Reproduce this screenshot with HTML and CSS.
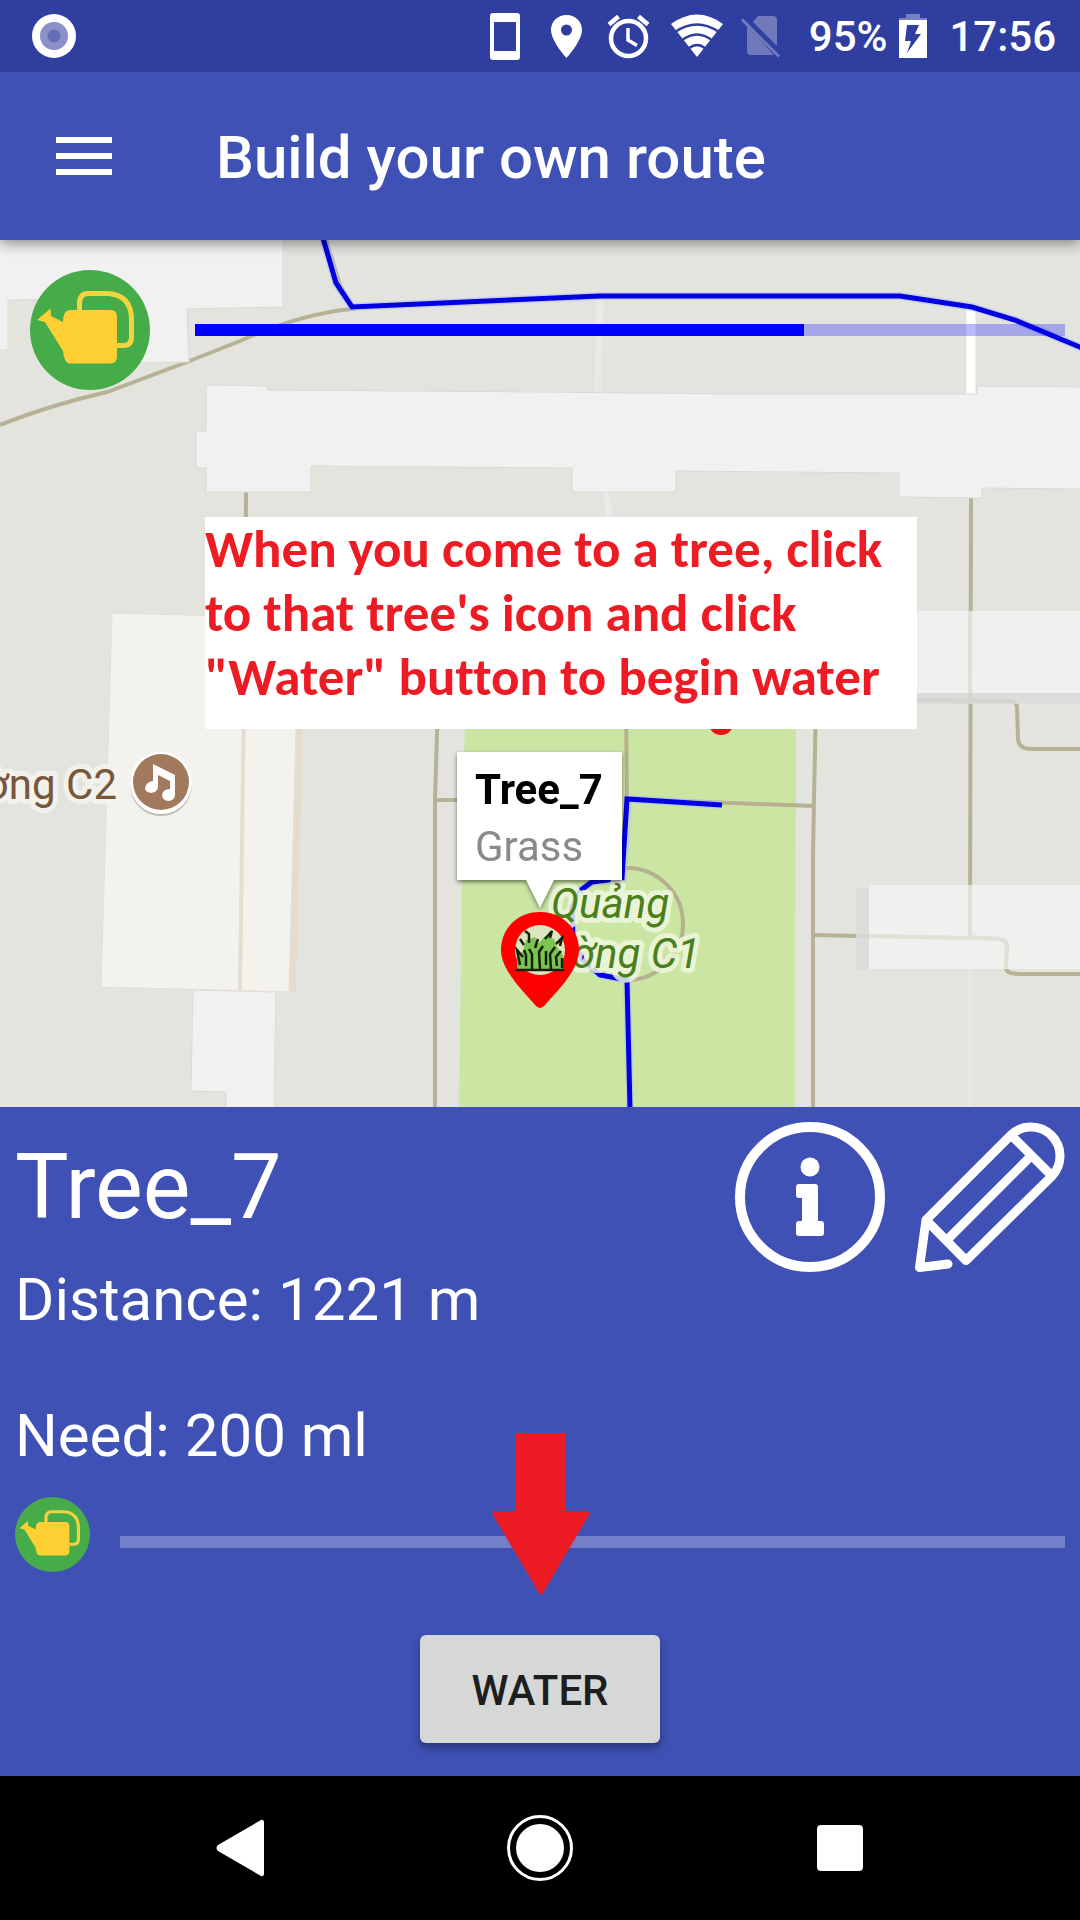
FILE: index.html
```html
<!DOCTYPE html>
<html lang="en">
<head>
<meta charset="utf-8">
<meta name="viewport" content="width=device-width, initial-scale=1">
<title>Build your own route</title>
<link rel="stylesheet" href="styles.css">
</head>
<body>
<svg class="defs" aria-hidden="true">
  <symbol id="watering-can" viewBox="0 0 120 120">
    <circle cx="60" cy="60" r="60" fill="#46ac49"/>
    <path d="M49.500 42V33.500Q49.500 23.500 58.500 23.500H78Q101.500 25 101.500 50V67Q101.500 75.500 93.500 75.500H86" fill="none" stroke="#f3d33e" stroke-width="5"/>
    <path d="M7 50L20.500 38.500L21 46L33 52Q33 40 40 40H81Q87 40 87 47V86Q87 93.500 80 93.500H40Q34 93.500 33 81L15 52Z" fill="#ffd033"/>
  </symbol>
</svg>

<div class="status-bar">
  <svg class="recorder" viewBox="0 0 44 44" aria-hidden="true"><circle cx="22" cy="22" r="22" fill="#fff"/><circle cx="22" cy="22" r="14" fill="#8991c7"/><circle cx="22" cy="22" r="6.500" fill="#666fb5"/></svg>
  <div class="status-icons">
    <svg class="status-icon" viewBox="0 0 64 72" aria-hidden="true"><path fill="#fff" fill-rule="evenodd" d="M19 13H43Q46 13 46 16V57Q46 60 43 60H19Q16 60 16 57V16Q16 13 19 13ZM20 22V51H42V22Z"/></svg>
    <svg class="status-icon" viewBox="0 0 64 72" aria-hidden="true"><path fill="#fff" fill-rule="evenodd" d="M28.500 15C19 15 13 22 13 30C13 41 28.500 58 28.500 58S44 41 44 30C44 22 38 15 28.500 15ZM28.500 24.500A5.500 5.500 0 1 1 28.500 35.500A5.500 5.500 0 1 1 28.500 24.500Z"/></svg>
    <svg class="status-icon" viewBox="0 0 64 72" aria-hidden="true"><g fill="none" stroke="#fff" stroke-width="4.500"><circle cx="26.500" cy="38.500" r="17.500"/><path d="M7 24.500L16.500 16.500M46 24.500L36.500 16.500"/><path stroke-width="3.500" d="M26 28V40L35 45.500"/></g></svg>
    <svg class="status-icon" viewBox="0 0 64 72" aria-hidden="true"><path fill="#fff" d="M5 24Q31 5 57 24L31 57Z"/><g fill="none" stroke="#303f9f" stroke-width="2.500"><path d="M9 32Q31 17 53 32M15 41Q31 28 47 41M22 49Q31 41 40 49"/></g></svg>
    <svg class="status-icon" viewBox="0 0 64 72" aria-hidden="true"><path fill="#6f79bc" d="M28 16H43Q47 16 47 20V46L23 22ZM17 25L44 55H21Q17 55 17 51Z"/><path d="M12 19.500L49 56.500" stroke="#6f79bc" stroke-width="3"/></svg>
  </div>
  <span class="battery-level">95%</span>
  <svg class="battery" viewBox="0 0 28 44" aria-hidden="true"><path fill="#7680bf" d="M7 0H21V4H28V7H0V4H7Z"/><path fill="#fff" fill-rule="evenodd" d="M0 6H28V44H0ZM8 11L6 27H12L8 39L22 20H16L20 11Z"/></svg>
  <span class="clock">17:56</span>
</div>

<header class="app-bar">
  <button class="menu-button" type="button" aria-label="Open menu">
    <svg class="menu-icon" viewBox="0 0 56 38" aria-hidden="true"><path fill="#fff" d="M0 0H56V6H0ZM0 16H56V22H0ZM0 32H56V38H0Z"/></svg>
  </button>
  <h1 class="app-title">Build your own route</h1>
</header>

<main class="map">
  <svg class="map-canvas" viewBox="0 240 1080 867" preserveAspectRatio="xMidYMin slice" role="img" aria-label="Map of the route">
    <rect x="0" y="240" width="1080" height="867" fill="#e3e4de"/>
    <polygon fill="#cbe6a3" points="467,600 797,600 796,728 795,986 795,1107 459,1107 462,880"/>
    <g fill="none" stroke="#e9e9ea" stroke-width="7">
      <path d="M600 299L598 392M606 492L612 530"/>
      <path stroke-width="3" d="M970 970V1107"/>
      <path stroke="#fff" stroke-width="9" d="M971 304V394"/>
    </g>
    <g fill="none" stroke="#b7b296" stroke-width="4">
      <path d="M0 425Q50 405 107 392L187 362L240 341Q300 314 352 309L340 285L326 240"/>
      <path d="M246 492L245 730L240 992"/>
      <path d="M438 700L435 800V1107M435 800H457"/>
      <path d="M626 700L627 799L814 806" stroke="#b7b08e"/>
      <path d="M816 700L814 800L813 856V1107"/>
      <path d="M971 498L970 940"/>
      <path d="M900 700L1010 701Q1017 701 1017 708L1018 738Q1018 749 1032 749H1080"/>
      <path d="M813 935L998 939Q1007 939 1007 948L1006 968Q1006 974 1020 974H1080"/>
      <circle cx="627" cy="924" r="56" stroke="#b7b08e"/>
    </g>
    <g fill="#f1f1f1" stroke="#dadbd6">
      <path d="M-2 238H283V307L187 309L189 362L140 363H100V299L8 300V350H-2Z"/>
      <path d="M206 385L267 386V390L540 392L730 394H977V386L1082 387V489L982 488V498L899 497V473L676 471V492H572V468L311 466V492H206V468H196V431H206Z"/>
      <path d="M193 990L276 992L274 1109H226V1092L191 1091Z"/>
    </g>
    <polygon fill="#e6dccd" points="296,617 306,617 296,992 286,992"/>
    <polygon fill="#f4f2ec" points="112,613 299,618 289,992 101,987" stroke="#e3dfd3"/>
    <path d="M245 618L240 991" stroke="#e2dfd0" stroke-width="4"/>
    <g fill="#f1f1f1" fill-opacity=".9">
      <path fill="#dadada" fill-opacity=".85" d="M900 693H1080V704H900ZM856 888H869V969H856Z"/>
      <path d="M900 611H1080V693H900ZM869 885H1080V969H869Z"/>
    </g>
    <path d="M970 611V693M970 885V937L998 939Q1007 939 1007 948L1006 968M869 936L970 938" fill="none" stroke="#e2e0d4" stroke-width="4"/>
    <g fill="none" stroke="#b9bff0" stroke-width="8" stroke-opacity=".6">
      <path d="M323 238L336 283L352 307L600 296H900L972 307L1015 320L1082 348"/>
      <path d="M722 805L628 799L623 878L592 882L581 890L572 907L573 940L583 960L600 975L627 980L630 1109"/>
    </g>
    <g fill="none" stroke="#0000e0" stroke-width="5">
      <path d="M323 238L336 283L352 307L600 296H900L972 307L1015 320L1082 348"/>
      <path d="M722 805L627 799L622 878L592 882L581 890L572 907L573 940L583 960L600 975L627 980L630 1109"/>
    </g>
    <g class="map-label park-label">
      <text x="610" y="918" text-anchor="middle">Quảng</text>
      <text x="605" y="968" text-anchor="middle">Trường C1</text>
    </g>
    <text class="map-label hall-label" x="117" y="799" text-anchor="end">ờng C2</text>
    <circle cx="161" cy="785" r="31" fill="#8a8780" fill-opacity=".5"/>
    <circle cx="161" cy="783" r="31" fill="#fff"/>
    <circle cx="161" cy="782" r="28" fill="#a1795d"/>
    <path fill="#fff" d="M153 764L175 775V794Q175 801 168 801Q162 800 162 795Q163 789 170 789V781L158 775V786Q158 792 151 793Q145 792 145 788Q146 782 153 781Z"/>
    <ellipse cx="721" cy="724" rx="12" ry="11" fill="#ed1010"/>
    <path fill="red" d="M540 912C517 912 501 929 501 950C501 972 528 996 535 1005Q540 1011 545 1005C552 996 579 972 579 950C579 929 563 912 540 912Z"/>
    <circle cx="540" cy="950" r="25" fill="#dbe6bd"/>
    <path fill="#7cc451" d="M517 969V957L523 951L526 940L535 937L538 944L545 936L554 939L557 947L563 955V969Z"/>
    <path fill="none" stroke="#15200d" stroke-width="2.500" d="M516 970H564M520 965L517 950L523 957M524 945L520 939M526 966V955L524 950M529 943V934L525 931M532 969V954L529 949M535 948L538 939M540 969L539 952L543 946M546 965V951M545 939L552 931L550 938M551 969L550 954L555 947M557 966L556 957L561 951M556 944L562 938L560 946M562 968V958"/>
  </svg>

  <div class="tank">
    <svg class="tank-icon" viewBox="0 0 120 120" aria-hidden="true"><use href="#watering-can"/></svg>
    <progress class="meter tank-meter" value="70" max="100" aria-label="Water left in the can"></progress>
  </div>

  <p class="note">When you come to a tree, click<br>to that tree's icon and click<br>"Water" button to begin water</p>

  <div class="callout">
    <strong class="callout-title">Tree_7</strong>
    <span class="callout-kind">Grass</span>
  </div>
</main>

<section class="panel">
  <div class="panel-head">
    <div class="panel-names">
      <h2 class="tree-name">Tree_7</h2>
      <p class="detail">Distance: 1221 m</p>
    </div>
    <div class="actions">
      <button class="icon-button" type="button" aria-label="Tree information">
        <svg class="action-icon" viewBox="0 0 150 150" aria-hidden="true"><circle cx="75" cy="75" r="70" fill="none" stroke="#fff" stroke-width="10"/><circle cx="75" cy="45" r="9.500" fill="#fff"/><path fill="#fff" d="M64 62H80Q83 62 83 65V99H86Q89 99 89 102V111Q89 114 86 114H64Q61 114 61 111V102Q61 99 64 99H67V76H64Q61 76 61 73V65Q61 62 64 62Z"/></svg>
      </button>
      <button class="icon-button" type="button" aria-label="Edit tree">
        <svg class="action-icon" viewBox="0 0 150 150" aria-hidden="true"><path fill="none" stroke="#fff" stroke-width="9" stroke-linejoin="round" stroke-linecap="round" d="M33 142L4.500 145.500L11 98L96 13A29 29 0 0 1 137 54L51 138.500L11 98M96 13L137 54M115 35L32 118"/></svg>
      </button>
    </div>
  </div>
  <p class="detail need">Need: 200 ml</p>
  <div class="dose">
    <svg class="dose-icon" viewBox="0 0 120 120" aria-hidden="true"><use href="#watering-can"/></svg>
    <progress class="meter dose-meter" value="0" max="200" aria-label="Water given"></progress>
  </div>
  <button class="water-button" type="button">WATER</button>
  <svg class="pointer" viewBox="0 0 98 162" aria-hidden="true"><path fill="#ed1c24" d="M25 0H72Q74 0 74 2V78H96Q98 79 97 82L51 160Q49 163 47 160L1 82Q0 79 2 78H23V2Z"/></svg>
</section>

<nav class="nav-bar" aria-label="System">
  <button class="nav-button" type="button" aria-label="Back"><svg class="nav-icon" viewBox="0 0 66 66" aria-hidden="true"><path fill="#fff" d="M54 5Q57 4 57 8V58Q57 62 54 61L11 36Q8 33 11 30Z"/></svg></button>
  <button class="nav-button" type="button" aria-label="Home"><svg class="nav-icon" viewBox="0 0 66 66" aria-hidden="true"><circle cx="33" cy="33" r="31.500" fill="none" stroke="#fff" stroke-width="3"/><circle cx="33" cy="33" r="24" fill="#fff"/></svg></button>
  <button class="nav-button" type="button" aria-label="Recent apps"><svg class="nav-icon" viewBox="0 0 66 66" aria-hidden="true"><rect x="10" y="10" width="46" height="46" rx="4" fill="#fff"/></svg></button>
</nav>
</body>
</html>
```
FILE: styles.css
```css
* {
  box-sizing: border-box;
}

body {
  margin: 0;
  min-height: 100vh;
  display: flex;
  flex-direction: column;
  background: #000;
  color: #fff;
  font-family: Roboto, "Noto Sans", sans-serif;
}

h1,
h2,
p {
  margin: 0;
  font-weight: 400;
}

button {
  margin: 0;
  padding: 0;
  border: 0;
  background: none;
  color: inherit;
  font: inherit;
}

svg {
  display: block;
}

.defs {
  position: absolute;
  width: 0;
  height: 0;
}

/* Status bar */
.status-bar {
  position: relative;
  z-index: 2;
  display: flex;
  align-items: center;
  height: 72px;
  padding: 0 24px 0 32px;
  background: #303f9f;
  font-size: 42px;
  font-weight: 500;
  line-height: 48px;
}

.battery-level,
.clock {
  padding-top: 2px;
}

.recorder {
  width: 44px;
  height: 44px;
}

.status-icons {
  display: flex;
  margin-left: auto;
  margin-right: 15px;
}

.status-icon {
  width: 64px;
  height: 72px;
}

.battery {
  width: 28px;
  height: 44px;
  margin: 0 22px 0 12px;
}

/* App bar */
.app-bar {
  position: relative;
  z-index: 1;
  display: flex;
  align-items: center;
  gap: 104px;
  height: 168px;
  padding: 0 56px;
  background: #3f51b5;
  box-shadow: 0 4px 12px rgba(0, 0, 0, .4);
}

.menu-icon {
  width: 56px;
  height: 38px;
}

.app-title {
  padding-top: 4px;
  font-size: 60px;
  font-weight: 500;
  line-height: 72px;
}

/* Map */
.map {
  position: relative;
  flex: 1 0 860px;
  overflow: hidden;
}

.map-canvas {
  position: absolute;
  width: 100%;
  height: 100%;
}

.map-label {
  font-size: 42px;
  paint-order: stroke;
  stroke-width: 10px;
  stroke-linejoin: round;
}

.park-label {
  fill: #4a7f1c;
  stroke: #eef7dfd8;
  font-style: italic;
}

.hall-label {
  fill: #77563c;
  stroke: #f6f4efd8;
}

.meter {
  appearance: none;
  flex: 1;
  height: 12px;
  border: 0;
}

.meter::-webkit-progress-bar {
  background: transparent;
}

.tank {
  position: absolute;
  inset: 30px 15px auto 30px;
  display: flex;
  align-items: center;
  gap: 45px;
}

.tank-icon {
  width: 120px;
  height: 120px;
}

.tank-meter {
  background: rgba(0, 0, 255, .27);
}

.tank-meter::-webkit-progress-value {
  background: #00f;
}

.note {
  position: absolute;
  top: 277px;
  left: 205px;
  width: 712px;
  padding-bottom: 20px;
  background: #fff;
  color: #ed1c24;
  font-family: Carlito, Calibri, "Open Sans", sans-serif;
  font-size: 53px;
  font-variant-ligatures: none;
  font-weight: 700;
  line-height: 64px;
  white-space: nowrap;
}

.callout {
  position: absolute;
  top: 512px;
  left: calc(50% - 83px);
  display: flex;
  flex-direction: column;
  width: 165px;
  padding: 9px 0 5px 18px;
  background: #fff;
  color: #000;
  font-size: 42px;
  line-height: 57px;
  filter: drop-shadow(0 2px 2px rgba(0, 0, 0, .5));
}

.callout::after {
  content: "";
  position: absolute;
  top: 100%;
  left: 69px;
  width: 28px;
  height: 28px;
  background: #fff;
  clip-path: polygon(0 0, 100% 0, 50% 100%);
}

.callout-kind {
  color: #8a8a8a;
}

/* Details of the selected tree */
.panel {
  position: relative;
  display: flex;
  flex-direction: column;
  padding: 15px 15px 33px;
  background: #3f51b5;
}

.panel-head {
  display: flex;
  justify-content: space-between;
}

.tree-name {
  font-size: 90px;
  line-height: 132px;
}

.detail {
  margin-top: 10px;
  font-size: 60px;
  line-height: 72px;
}

.need {
  margin-top: 64px;
}

.actions {
  display: flex;
  align-items: flex-start;
  gap: 30px;
}

.action-icon {
  width: 150px;
  height: 150px;
}

.dose {
  display: flex;
  gap: 30px;
  margin-top: 25px;
}

.dose-icon {
  width: 75px;
  height: 75px;
}

.dose-meter {
  margin-top: 39px;
  background: #7180c8;
}

.water-button {
  align-self: center;
  width: 240px;
  height: 108px;
  margin-top: 63px;
  padding-top: 2px;
  border-radius: 6px;
  background: #d6d8d7;
  box-shadow: 0 5px 8px rgba(0, 0, 0, .35);
  color: #1d1e1e;
  font-size: 42px;
  font-weight: 500;
}

.pointer {
  position: absolute;
  top: 326px;
  left: calc(50% - 48px);
  width: 98px;
  height: 162px;
}

/* System navigation */
.nav-bar {
  display: flex;
  height: 144px;
  padding: 0 90px;
}

.nav-button {
  display: flex;
  flex: 1;
  align-items: center;
  justify-content: center;
}

.nav-icon {
  width: 66px;
  height: 66px;
}
```
